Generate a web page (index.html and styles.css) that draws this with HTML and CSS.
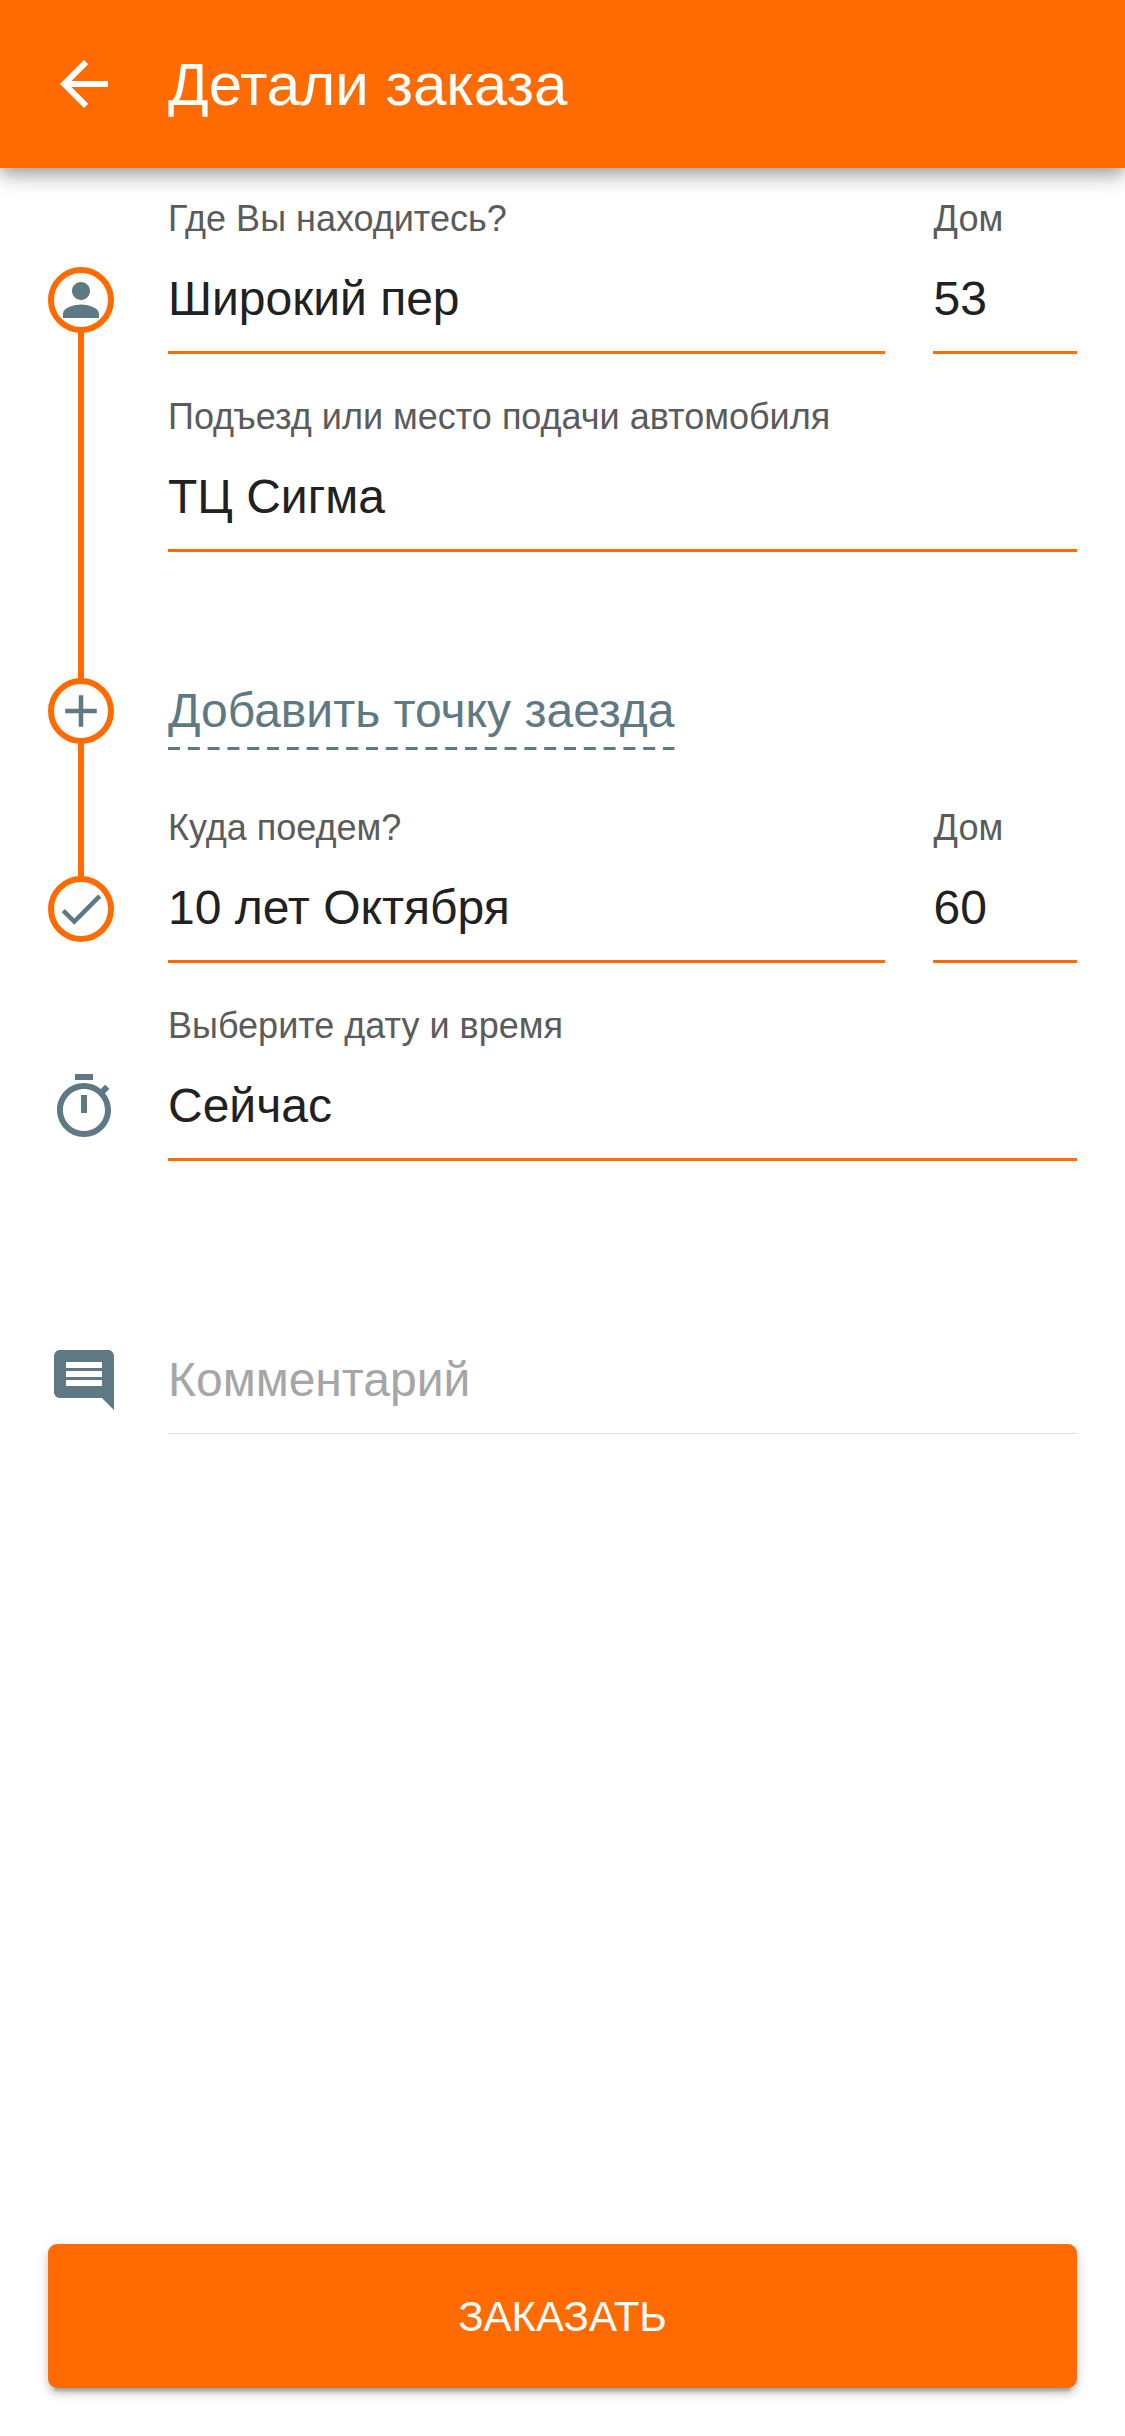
FILE: index.html
```html
<!DOCTYPE html>
<html lang="ru">

<head>
  <meta charset="UTF-8">
  <meta name="viewport" content="width=device-width, initial-scale=1.0">
  <title>Детали заказа</title>
  <link rel="stylesheet" href="styles.css">
</head>

<body>
  <header class="toolbar">
    <svg class="icon" viewBox="0 0 24 24"><path d="M20 11H7.83l5.59-5.59L12 4l-8 8 8 8 1.41-1.41L7.83 13H20v-2z"/></svg>
    <h1 class="title">Детали заказа</h1>
  </header>

  <main class="content">
    <!-- Pickup -->
    <section class="row pickup">
      <div class="rail">
        <div class="point">
          <svg viewBox="0 0 24 24"><path d="M12 12c2.21 0 4-1.79 4-4s-1.79-4-4-4-4 1.79-4 4 1.79 4 4 4zm0 2c-2.67 0-8 1.34-8 4v2h16v-2c0-2.66-5.33-4-8-4z"/></svg>
        </div>
        <div class="line"></div>
      </div>
      <div class="fields">
        <div class="address">
          <div class="field street">
            <div class="label">Где Вы находитесь?</div>
            <div class="value">Широкий пер</div>
          </div>
          <div class="field house">
            <div class="label">Дом</div>
            <div class="value">53</div>
          </div>
        </div>
        <div class="field">
          <div class="label">Подъезд или место подачи автомобиля</div>
          <div class="value">ТЦ Сигма</div>
        </div>
      </div>
    </section>

    <!-- Extra stop -->
    <section class="row stop">
      <div class="rail">
        <div class="point">
          <svg viewBox="0 0 24 24"><path d="M19 13h-6v6h-2v-6H5v-2h6V5h2v6h6v2z"/></svg>
        </div>
        <div class="line"></div>
      </div>
      <div class="fields">
        <a class="add-stop">
          <span>Добавить точку заезда</span>
          <svg class="dashes"><line x1="0" y1="1.5" x2="100%" y2="1.5"/></svg>
        </a>
      </div>
    </section>

    <!-- Destination -->
    <section class="row">
      <div class="rail">
        <div class="point">
          <svg viewBox="0 0 24 24"><path d="M9 16.17L4.83 12l-1.42 1.41L9 19 21 7l-1.41-1.41z"/></svg>
        </div>
      </div>
      <div class="fields address">
        <div class="field street">
          <div class="label">Куда поедем?</div>
          <div class="value">10 лет Октября</div>
        </div>
        <div class="field house">
          <div class="label">Дом</div>
          <div class="value">60</div>
        </div>
      </div>
    </section>

    <section class="row time">
      <div class="rail">
        <svg class="icon" viewBox="0 0 24 24"><path d="M15 1H9v2h6V1zm-4 13h2V8h-2v6zm8.03-6.61l1.42-1.42c-.43-.51-.9-.99-1.41-1.41l-1.42 1.42C16.07 4.74 14.12 4 12 4c-4.97 0-9 4.03-9 9s4.02 9 9 9 9-4.03 9-9c0-2.12-.74-4.07-1.97-5.61zM12 20c-3.87 0-7-3.13-7-7s3.13-7 7-7 7 3.13 7 7-3.13 7-7 7z"/></svg>
      </div>
      <div class="fields">
        <div class="field">
          <div class="label">Выберите дату и время</div>
          <div class="value">Сейчас</div>
        </div>
      </div>
    </section>

    <section class="row comment">
      <svg class="icon" viewBox="0 0 24 24"><path d="M21.99 4c0-1.1-.89-2-1.99-2H4c-1.1 0-2 .9-2 2v12c0 1.1.9 2 2 2h14l4 4-.01-18zM18 14H6v-2h12v2zm0-3H6V9h12v2zm0-3H6V6h12v2z"/></svg>
      <div class="fields placeholder">Комментарий</div>
    </section>
  </main>

  <footer class="footer">
    <button class="order">ЗАКАЗАТЬ</button>
  </footer>
</body>

</html>
```

FILE: styles.css
```css
* {
  box-sizing: border-box;
}

body {
  margin: 0;
  min-height: 2436px;
  display: flex;
  flex-direction: column;
  font-family: "Liberation Sans", Arial, sans-serif;
  color: #212121;
  background-color: #fff;
}

.icon {
  display: block;
  flex: none;
  width: 72px;
  height: 72px;
  fill: #5e7983;
}

.toolbar {
  display: flex;
  align-items: center;
  gap: 48px;
  height: 168px;
  padding: 0 48px;
  color: #fff;
  background-color: #ff6b00;
  box-shadow: 0 6px 12px -3px rgba(0, 0, 0, .2), 0 12px 15px rgba(0, 0, 0, .14), 0 3px 30px rgba(0, 0, 0, .12);
}

.toolbar .icon {
  fill: #fff;
}

.title {
  margin: 0;
  font-size: 60px;
  font-weight: normal;
}

.content {
  flex: 1;
  padding: 0 48px;
}

.row {
  display: flex;
}

.rail {
  flex: none;
  display: flex;
  flex-direction: column;
  width: 120px;
  padding-top: 81px;
}

.point {
  flex: none;
  width: 66px;
  height: 66px;
  border: 6px solid #ff6b00;
  border-radius: 50%;
}

.point svg {
  display: block;
  width: 54px;
  height: 54px;
  fill: #5e7983;
}

/* runs past the row down to the next point */
.line {
  flex: 1;
  width: 6px;
  margin: -2px 0 -20px 30px;
  background-color: #ff6b00;
}

.fields {
  flex: 1;
}

.pickup {
  height: 492px;
  padding-top: 18px;
}

.address {
  display: flex;
  gap: 48px;
}

.street {
  flex: 1;
}

.house {
  width: 144px;
  text-indent: .6px;
}

.field {
  height: 198px;
}

.label {
  height: 66px;
  line-height: 66px;
  font-size: 36px;
  color: #5b5b5b;
}

.value {
  height: 102px;
  border-bottom: 3px solid #ff6b00;
  font-size: 48px;
  line-height: 93px;
}

.stop {
  height: 135px;
}

.stop .rail {
  padding-top: 18px;
}

.stop .line {
  margin-bottom: -83px;
}

.add-stop {
  display: inline-block;
  margin-top: 18px;
  color: #5e7983;
  font-size: 48px;
  line-height: 66px;
}

.add-stop span {
  display: block;
}

.dashes {
  display: block;
  width: 100%;
  height: 3px;
  margin-top: 3px;
  overflow: visible;
  stroke: #5e7983;
  stroke-width: 3;
  stroke-dasharray: 12 7.8;
}

.time .rail {
  padding-top: 78px;
}

.comment {
  padding-top: 153px;
  gap: 48px;
}

.placeholder {
  height: 90px;
  border-bottom: 1px solid #e0e0e0;
  color: #a6a6a6;
  font-size: 48px;
  line-height: 72px;
}

.footer {
  padding: 48px;
}

.order {
  display: block;
  width: 100%;
  height: 144px;
  padding: 2px 0 0;
  border: 0;
  border-radius: 9px;
  color: #fff;
  background-color: #ff6b00;
  font-family: inherit;
  font-size: 42px;
  box-shadow: 0 9px 3px -6px rgba(0, 0, 0, .2), 0 6px 6px rgba(0, 0, 0, .14), 0 3px 15px rgba(0, 0, 0, .12);
}
```
